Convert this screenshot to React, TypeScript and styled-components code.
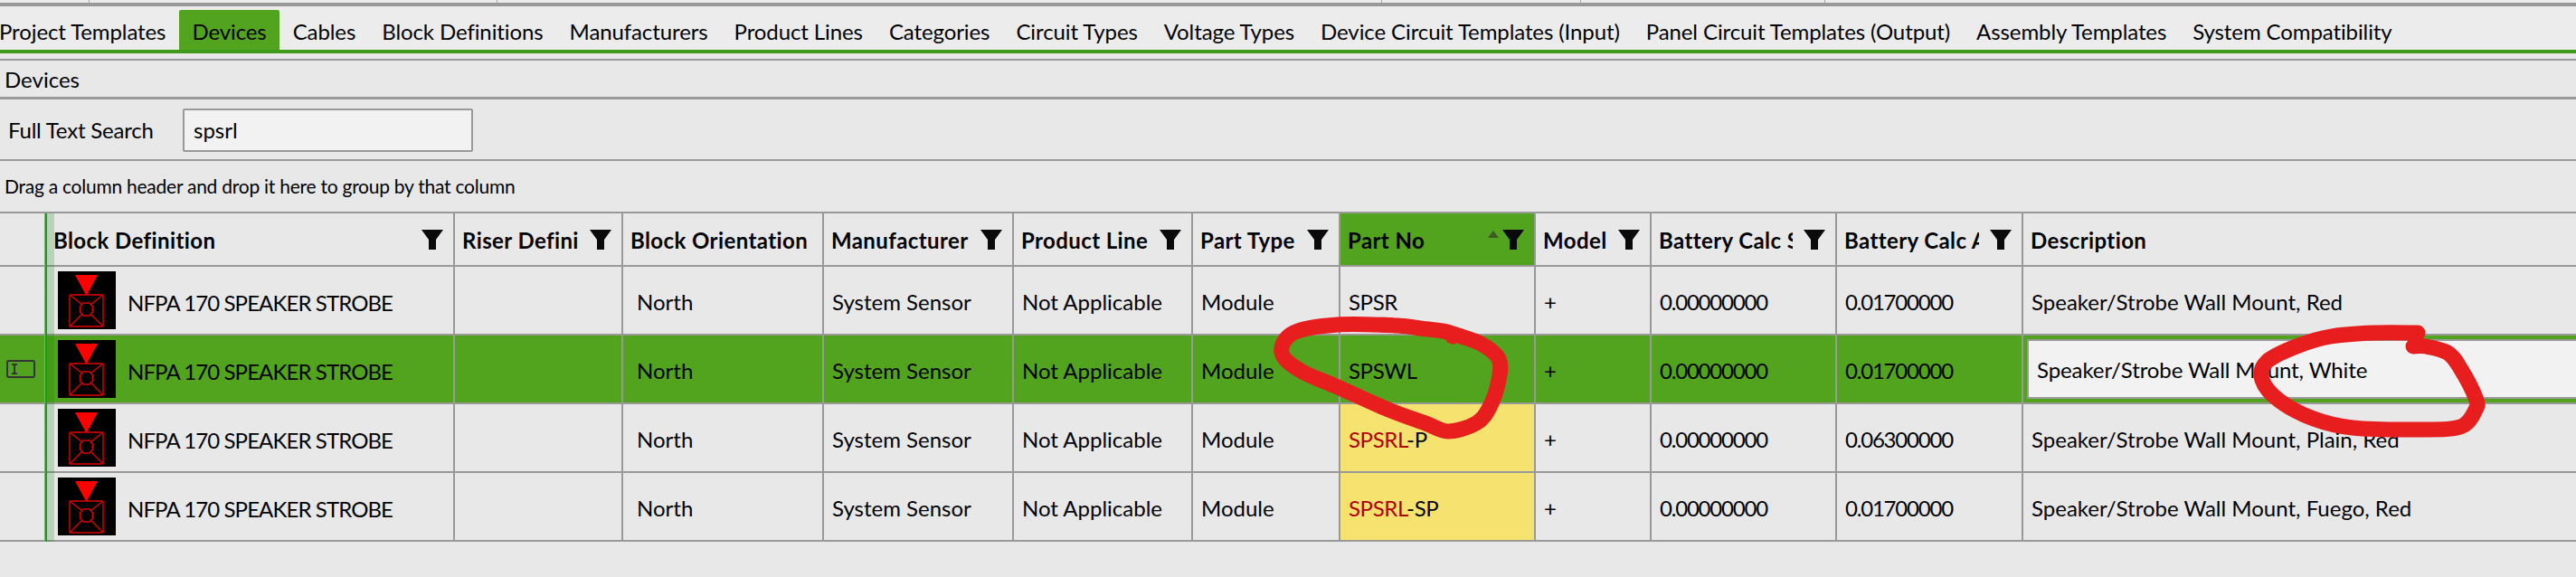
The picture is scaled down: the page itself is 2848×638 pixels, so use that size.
import styled, { createGlobalStyle } from "styled-components";

const GlobalStyle = createGlobalStyle`
  html, body {
    margin: 0;
    padding: 0;
    background: #e8e8e8;
  }
  * {
    box-sizing: border-box;
  }
`;

const GREEN = "#52a41f";
const LINE = "#999999";
const COLUMNS = "51px 452px 186px 222px 210px 198px 163px 216px 128px 205px 206px 1fr";

const tabs = [
  "Project Templates",
  "Devices",
  "Cables",
  "Block Definitions",
  "Manufacturers",
  "Product Lines",
  "Categories",
  "Circuit Types",
  "Voltage Types",
  "Device Circuit Templates (Input)",
  "Panel Circuit Templates (Output)",
  "Assembly Templates",
  "System Compatibility",
];

const headers = [
  "Block Definition",
  "Riser Definition",
  "Block Orientation",
  "Manufacturer",
  "Product Line",
  "Part Type",
  "Part No",
  "Model",
  "Battery Calc Standby",
  "Battery Calc Alarm",
  "Description",
];

const NO_FILTER = ["Block Orientation", "Description"];

interface IDevice {
  partNo: string;
  match?: string;
  alarm: string;
  description: string;
}

const devices: IDevice[] = [
  { partNo: "SPSR", alarm: "0.01700000", description: "Speaker/Strobe Wall Mount, Red" },
  { partNo: "SPSWL", alarm: "0.01700000", description: "Speaker/Strobe Wall Mount, White" },
  { partNo: "-P", match: "SPSRL", alarm: "0.06300000", description: "Speaker/Strobe Wall Mount, Plain, Red" },
  { partNo: "-SP", match: "SPSRL", alarm: "0.01700000", description: "Speaker/Strobe Wall Mount, Fuego, Red" },
];

const SELECTED_ROW = 1;

// Catmull-Rom through the points, so the marker strokes come out round
const smooth = (pts: number[][]): string => {
  let d = `M${pts[0][0]} ${pts[0][1]}`;
  for (let i = 0; i < pts.length - 1; i++) {
    const p0 = pts[Math.max(i - 1, 0)];
    const p1 = pts[i];
    const p2 = pts[i + 1];
    const p3 = pts[Math.min(i + 2, pts.length - 1)];
    const c1x = p1[0] + (p2[0] - p0[0]) / 6;
    const c1y = p1[1] + (p2[1] - p0[1]) / 6;
    const c2x = p2[0] - (p3[0] - p1[0]) / 6;
    const c2y = p2[1] - (p3[1] - p1[1]) / 6;
    d += ` C${c1x} ${c1y} ${c2x} ${c2y} ${p2[0]} ${p2[1]}`;
  }
  return d;
};

const partNoStroke = [
  [1606, 372], [1600, 367], [1570, 363], [1545, 360], [1479, 359], [1430, 368], [1417, 390],
  [1438, 410], [1479, 428], [1535, 453], [1576, 468], [1601, 477], [1632, 468], [1647, 450],
  [1657, 420], [1657, 397], [1637, 380], [1600, 367],
];

const descriptionStroke = [
  [2673, 368], [2625, 368], [2577, 372], [2539, 383], [2506, 400], [2501, 420], [2520, 443],
  [2558, 463], [2601, 473], [2673, 475], [2720, 472], [2737, 453], [2737, 440], [2720, 407],
  [2706, 390], [2682, 383], [2668, 383],
];

const FilterIcon = () => (
  <FilterSvg viewBox="0 0 24 22">
    <path d="M0 0H24L16 11V22H8V11Z" fill="#0a0a0a" />
  </FilterSvg>
);

const BlockThumb = () => (
  <ThumbSvg viewBox="0 0 64 64">
    <rect width="64" height="64" fill="#000" />
    <path d="M19 4H44L31.5 27Z" fill="#ff0000" />
    <g fill="none" stroke="#e00000" strokeWidth="1.4">
      <rect x="13" y="26" width="37" height="35" rx="1" />
      <path d="M13 26L27 37M50 26L36 37M27 47L13 61M36 47L50 61" />
      <path d="M28 35H35L38.5 39V45L35 49H28L24.5 45V39Z" />
    </g>
  </ThumbSvg>
);

const EditIndicator = () => (
  <IndicatorSvg viewBox="0 0 32 20">
    <rect x="1" y="1" width="30" height="18" rx="2" fill="none" stroke="#333" strokeWidth="2" />
    <path d="M6 5H12M9 5V15M6 15H12" fill="none" stroke="#333" strokeWidth="2" />
  </IndicatorSvg>
);

export default function App() {
  return (
    <Page>
      <GlobalStyle />
      <TopStrip>
        {[99, 451, 978, 220, 270].map((width) => (
          <TopCell key={width} style={{ width }} />
        ))}
      </TopStrip>
      <TabBar>
        {tabs.map((tab) => (
          <Tab key={tab} $active={tab === "Devices"}>
            {tab}
          </Tab>
        ))}
      </TabBar>
      <TabGap />
      <Title>Devices</Title>
      <SearchRow>
        <SearchLabel>Full Text Search</SearchLabel>
        <SearchBox>spsrl</SearchBox>
      </SearchRow>
      <GroupPanel>Drag a column header and drop it here to group by that column</GroupPanel>
      <Table>
        <HeaderRow>
          <HeaderCell />
          {headers.map((header) => (
            <HeaderCell key={header} $active={header === "Part No"}>
              <HeaderText>{header}</HeaderText>
              {header === "Part No" && <SortArrow />}
              {!NO_FILTER.includes(header) && <FilterIcon />}
            </HeaderCell>
          ))}
        </HeaderRow>
        {devices.map((device, index) => (
          <Row key={device.partNo} $selected={index === SELECTED_ROW}>
            <Cell $center>{index === SELECTED_ROW && <EditIndicator />}</Cell>
            <BlockCell>
              <BlockThumb />
              <BlockName>NFPA 170 SPEAKER STROBE</BlockName>
            </BlockCell>
            <Cell />
            <Cell $indent>North</Cell>
            <Cell>System Sensor</Cell>
            <Cell>Not Applicable</Cell>
            <Cell>Module</Cell>
            <Cell $match={Boolean(device.match)}>
              <PartNo>
                {device.match && <Match>{device.match}</Match>}
                {device.partNo}
              </PartNo>
            </Cell>
            <Cell>+</Cell>
            <Cell>
              <Amount>0.00000000</Amount>
            </Cell>
            <Cell>
              <Amount>{device.alarm}</Amount>
            </Cell>
            {index === SELECTED_ROW ? (
              <EditCell>
                <EditBox>{device.description}</EditBox>
              </EditCell>
            ) : (
              <Cell>{device.description}</Cell>
            )}
          </Row>
        ))}
        <FrozenLine />
      </Table>
      <Marker viewBox="0 0 2848 638">
        <MarkerPath d={smooth(partNoStroke)} />
        <MarkerPath d={smooth(descriptionStroke)} />
      </Marker>
    </Page>
  );
}

const Page = styled.div`
  position: relative;
  width: 2848px;
  height: 638px;
  overflow: hidden;
  background: #e8e8e8;
  color: #000;
  font-family: Lato, "Open Sans", sans-serif;
  font-size: 24px;
`;

const TopStrip = styled.div`
  display: flex;
  height: 7px;
  border-bottom: 4px solid ${LINE};
  background: #ececec;
`;

const TopCell = styled.div`
  height: 3px;
  border-right: 1px solid #aaaaaa;
`;

const TabBar = styled.div`
  display: flex;
  gap: 1px;
  height: 52px;
  padding: 4px 0 0 0;
  margin-left: -1px;
  border-bottom: 4px solid #3f9a1a;
  background: #ececec;
  letter-spacing: -0.1px;
`;

const Tab = styled.div<{ $active?: boolean }>`
  display: flex;
  align-items: center;
  height: 44px;
  padding: 3px 14px 0;
  border-radius: 2px 2px 0 0;
  background: ${({ $active }) => ($active ? GREEN : "transparent")};
  white-space: nowrap;

  &:first-child {
    padding: 3px 14px 0 0;
  }
`;

const TabGap = styled.div`
  height: 8px;
  border-bottom: 2px solid ${LINE};
`;

const Title = styled.div`
  display: flex;
  align-items: center;
  height: 43px;
  padding: 1px 0 0 5px;
  border-bottom: 3px solid ${LINE};
`;

const SearchRow = styled.div`
  display: flex;
  align-items: center;
  height: 68px;
  padding: 1px 0 0 9px;
  border-bottom: 2px solid ${LINE};
`;

const SearchLabel = styled.div`
  width: 193px;
  letter-spacing: -0.2px;
`;

const SearchBox = styled.div`
  display: flex;
  align-items: center;
  width: 321px;
  height: 48px;
  padding-left: 10px;
  border: 2px solid ${LINE};
  border-radius: 2px;
  background: #f2f2f2;
`;

const GroupPanel = styled.div`
  display: flex;
  align-items: center;
  height: 56px;
  padding: 0 0 2px 5px;
  font-size: 21px;
  letter-spacing: -0.25px;
`;

const Table = styled.div`
  position: relative;
  border-top: 2px solid ${LINE};
`;

const HeaderRow = styled.div`
  display: grid;
  grid-template-columns: ${COLUMNS};
  height: 59px;
  border-bottom: 2px solid ${LINE};
`;

const HeaderCell = styled.div<{ $active?: boolean }>`
  display: flex;
  align-items: center;
  gap: 12px;
  min-width: 0;
  padding: 0 11px 0 8px;
  border-right: 2px solid ${LINE};
  background: ${({ $active }) => ($active ? GREEN : "transparent")};

  &:last-child {
    border-right: 0;
  }
`;

const HeaderText = styled.div`
  flex: 1;
  min-width: 0;
  padding-top: 2px;
  overflow: hidden;
  white-space: nowrap;
  font-weight: 700;
  letter-spacing: 0.4px;
`;

const FilterSvg = styled.svg`
  flex: none;
  width: 24px;
  height: 22px;
`;

const SortArrow = styled.div`
  flex: none;
  width: 0;
  height: 0;
  margin: -12px -8px 0 0;
  border-left: 6px solid transparent;
  border-right: 6px solid transparent;
  border-bottom: 8px solid #3c5c26;
`;

const Row = styled.div<{ $selected?: boolean }>`
  display: grid;
  grid-template-columns: ${COLUMNS};
  height: 76px;
  border-bottom: 2px solid ${LINE};
  background: ${({ $selected }) => ($selected ? GREEN : "transparent")};
`;

const Cell = styled.div<{ $center?: boolean; $indent?: boolean; $match?: boolean }>`
  display: flex;
  align-items: center;
  min-width: 0;
  padding: ${({ $center, $indent }) => ($center ? "0 0 0 7px" : $indent ? "3px 0 0 15px" : "3px 0 0 9px")};
  border-right: 2px solid ${LINE};
  background: ${({ $match }) => ($match ? "#f6e26f" : "transparent")};
  white-space: nowrap;

  &:last-child {
    border-right: 0;
  }
`;

const BlockCell = styled.div`
  display: flex;
  align-items: center;
  gap: 13px;
  padding-left: 13px;
  border-right: 2px solid ${LINE};
`;

const BlockName = styled.div`
  padding-top: 4px;
  white-space: nowrap;
  letter-spacing: -0.9px;
`;

const PartNo = styled.div`
  letter-spacing: -0.4px;
`;

const Amount = styled.div`
  letter-spacing: -1.2px;
`;

const Match = styled.span`
  color: #b00000;
`;

const EditCell = styled.div`
  display: flex;
  padding: 4px 0 4px 4px;
`;

const EditBox = styled.div`
  display: flex;
  align-items: center;
  flex: 1;
  padding-left: 9px;
  border: 2px solid ${LINE};
  border-right: 0;
  background: #f2f2f2;
  white-space: nowrap;
  letter-spacing: -0.1px;
`;

const ThumbSvg = styled.svg`
  flex: none;
  width: 64px;
  height: 64px;
`;

const IndicatorSvg = styled.svg`
  width: 32px;
  height: 20px;
`;

const FrozenLine = styled.div`
  position: absolute;
  top: 0;
  bottom: 0;
  left: 50px;
  width: 10px;
  border-left: 2px solid #1f9a1f;
  background: rgba(0, 128, 0, 0.2);
  pointer-events: none;
`;

const Marker = styled.svg`
  position: absolute;
  top: 0;
  left: 0;
  width: 2848px;
  height: 638px;
  pointer-events: none;
`;

const MarkerPath = styled.path`
  fill: none;
  stroke: #e81e1e;
  stroke-width: 17;
  stroke-linecap: round;
  stroke-linejoin: round;
`;
